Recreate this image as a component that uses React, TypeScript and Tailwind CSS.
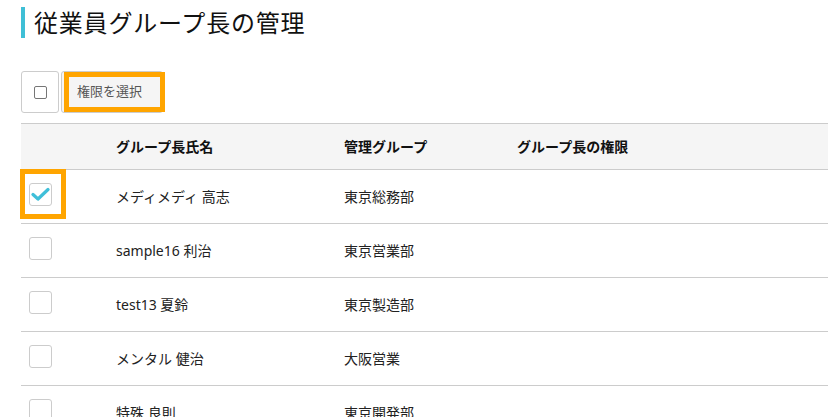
import React from "react";

const rows = [
  { name: "メディメディ 高志", group: "東京総務部", checked: true },
  { name: "sample16 利治", group: "東京営業部", checked: false },
  { name: "test13 夏鈴", group: "東京製造部", checked: false },
  { name: "メンタル 健治", group: "大阪営業", checked: false },
  { name: "特殊 良則", group: "東京開発部", checked: false },
];

function Check({ checked }: { checked: boolean }) {
  return (
    <span className="flex h-[23px] w-[23px] items-center justify-center rounded-[3px] border border-[#cccccc] bg-white">
      {checked && (
        <svg width="19" height="15" viewBox="0 0 19 15" fill="none">
          <path d="M2 7.5 L7 12 L17 2.5" stroke="#3fbfd9" strokeWidth="3.2" strokeLinecap="round" strokeLinejoin="round" />
        </svg>
      )}
    </span>
  );
}

export default function App() {
  return (
    <div
      className="relative h-[417px] w-[828px] overflow-hidden bg-white pl-[21px] text-[#333333]"
      style={{ fontFamily: '"Noto Sans", "Noto Sans CJK JP", sans-serif' }}
    >
      <div className="flex items-center pt-[7px]">
        <div className="h-[31px] w-[4px] bg-[#3fbfd6]" />
        <h1 className="ml-[9px] text-[24px] leading-[31px] font-normal tracking-[0.8px] text-[#111111]">
          従業員グループ長の管理
        </h1>
      </div>

      <div className="mt-[33px] flex items-center gap-[2px]">
        <div className="flex h-[42px] w-[38px] items-center justify-center rounded-[3px] border border-[#cccccc] bg-white">
          <span className="h-[13px] w-[13px] rounded-[2px] border border-[#767676] bg-white" />
        </div>
        <div className="relative flex h-[42px] w-[102px] items-center rounded-[3px] border border-[#cccccc] bg-[#f5f5f5] pl-[15px] text-[13px] text-[#555555]">
          権限を選択
          <div className="absolute left-[2px] top-[0px] h-[40px] w-[101px] border-[5px] border-[#ffa500]" />
        </div>
      </div>

      <div className="mt-[10px] w-[807px]">
        <div className="grid h-[47px] grid-cols-[95px_228px_173px_1fr] items-center border-y border-[#cccccc] bg-[#f5f5f5] text-[14px] font-bold text-[#111111]">
          <div />
          <div>グループ長氏名</div>
          <div>管理グループ</div>
          <div>グループ長の権限</div>
        </div>
        {rows.map((r, i) => (
          <div
            key={i}
            className="grid h-[54px] grid-cols-[95px_228px_173px_1fr] items-center border-b border-[#cccccc] text-[14px] text-[#222222]"
          >
            <div className="relative flex h-full items-center pl-[8px] pb-[4px]">
              <Check checked={r.checked} />
              {r.checked && (
                <div className="absolute left-[-1px] top-[-1px] h-[50px] w-[46px] border-[5px] border-[#ffa500]" />
              )}
            </div>
            <div>{r.name}</div>
            <div>{r.group}</div>
            <div />
          </div>
        ))}
      </div>
    </div>
  );
}
